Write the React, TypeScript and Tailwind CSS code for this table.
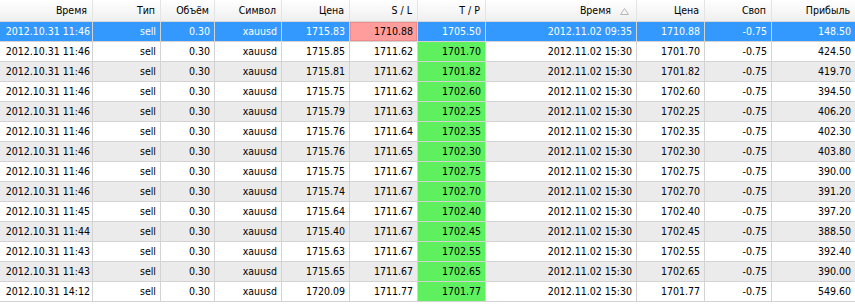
import React from 'react';

// terminal history table (closed orders)
const cols = 'grid-cols-[93px_68px_54px_67px_68px_68px_68px_151px_68px_67px_83px]';

type Row = [string, string, string, string, string, string, string];

// open time, price, s/l, t/p, close time, close price, profit
const rows: Row[] = [
    ['11:46', '1715.83', '1710.88', '1705.50', '09:35', '1710.88', '148.50'],
    ['11:46', '1715.85', '1711.62', '1701.70', '15:30', '1701.70', '424.50'],
    ['11:46', '1715.81', '1711.62', '1701.82', '15:30', '1701.82', '419.70'],
    ['11:46', '1715.75', '1711.62', '1702.60', '15:30', '1702.60', '394.50'],
    ['11:46', '1715.79', '1711.63', '1702.25', '15:30', '1702.25', '406.20'],
    ['11:46', '1715.76', '1711.64', '1702.35', '15:30', '1702.35', '402.30'],
    ['11:46', '1715.76', '1711.65', '1702.30', '15:30', '1702.30', '403.80'],
    ['11:46', '1715.75', '1711.67', '1702.75', '15:30', '1702.75', '390.00'],
    ['11:46', '1715.74', '1711.67', '1702.70', '15:30', '1702.70', '391.20'],
    ['11:45', '1715.64', '1711.67', '1702.40', '15:30', '1702.40', '397.20'],
    ['11:44', '1715.40', '1711.67', '1702.45', '15:30', '1702.45', '388.50'],
    ['11:43', '1715.63', '1711.67', '1702.55', '15:30', '1702.55', '392.40'],
    ['11:43', '1715.65', '1711.67', '1702.65', '15:30', '1702.65', '390.00'],
    ['14:12', '1720.09', '1711.77', '1701.77', '15:30', '1701.77', '549.60'],
];

const headers = ['Время', 'Тип', 'Объём', 'Символ', 'Цена', 'S / L', 'T / P', 'Время', 'Цена', 'Своп', 'Прибыль'];

export default function App() {
    return (
        <div className="w-[855px] h-[305px] overflow-hidden bg-white text-[10.5px] text-black" style={{ fontFamily: '"DejaVu Sans Condensed", "DejaVu Sans", sans-serif' }}>
            {/* Header */}
            <div className={`grid ${cols} h-[22px] bg-gradient-to-b from-white to-[#efefef] border-b border-[#d8d8d8]`}>
                {headers.map((h, i) => (
                    <div key={i} className="flex items-center justify-end pr-[5px] border-r border-[#e4e4e4] last:border-r-0">
                        {i === 7 ? (
                            <span className="flex items-center gap-[9px] pr-[2px]">
                                {h}
                                <svg width="9" height="7" viewBox="0 0 9 7" className="mt-[1px]">
                                    <path d="M4.5 0.5 L8.5 6.5 L0.5 6.5 Z" fill="none" stroke="#b8b8b8" strokeWidth="1" />
                                </svg>
                            </span>
                        ) : h}
                    </div>
                ))}
            </div>

            {/* Rows */}
            {rows.map((r, idx) => {
                const selected = idx === 0;
                const bg = selected ? 'bg-[#3399ff] text-white' : idx % 2 === 0 ? 'bg-[#ebebeb]' : 'bg-white';
                const cells = [`2012.10.31 ${r[0]}`, 'sell', '0.30', 'xauusd', r[1], r[2], r[3], `2012.11.02 ${r[4]}`, r[5], '-0.75', r[6]];
                return (
                    <div key={idx} className={`grid ${cols} h-[20px] ${bg}`}>
                        {cells.map((c, i) => {
                            let extra = '';
                            if (i === 5 && selected) extra = 'bg-[#ff9d9d] text-black shadow-[inset_0_0_0_1px_#f08a8a]';
                            if (i === 6 && !selected) extra = 'bg-[#5ff05f]';
                            return (
                                <div
                                    key={i}
                                    className={`flex items-center justify-end border-r border-b border-[#d3d3d3] last:border-r-0 ${i === 0 ? 'pr-[2px]' : 'pr-[4px]'} ${extra}`}
                                >
                                    {c}
                                </div>
                            );
                        })}
                    </div>
                );
            })}
        </div>
    );
}
